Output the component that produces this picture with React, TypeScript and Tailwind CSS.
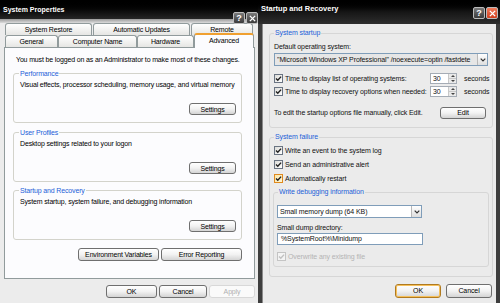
import React from "react";

const FL = "font-['Liberation_Sans',Arial,sans-serif] text-[7px] tracking-[-0.15px] leading-[9px] whitespace-nowrap";
const FR = "font-['Liberation_Sans',Arial,sans-serif] text-[7px] tracking-[-0.1px] leading-[8px] whitespace-nowrap";
const BTN =
  "flex items-center justify-center rounded-[3px] border border-[#6f6f6f] bg-linear-to-b from-[#ffffff] via-[#f2f2f2] to-[#d4d4d4] text-black";

function Check({ checked = true, hot = false, disabled = false }: { checked?: boolean; hot?: boolean; disabled?: boolean }) {
  const box = disabled
    ? "border-[#c4c4c4] bg-[#f4f4f4]"
    : hot
    ? "border-[#e08a1e] bg-linear-to-br from-[#fbe7a8] to-[#fff6d4]"
    : "border-[#6a7482] bg-linear-to-br from-[#dcdcd8] to-[#ffffff]";
  return (
    <span className={`flex h-[9px] w-[9px] shrink-0 items-center justify-center border ${box}`}>
      {checked && (
        <svg viewBox="0 0 7 7" className="h-[7px] w-[7px]">
          <path d="M1 3.4 L2.8 5.2 L6.1 1.6" stroke={disabled ? "#c0c0c0" : "#1f1f1f"} strokeWidth="1.4" fill="none" />
        </svg>
      )}
    </span>
  );
}

function Arrow() {
  return (
    <span className="flex h-full w-[10px] items-center justify-center border-l border-[#b8b8b8] bg-linear-to-b from-[#ffffff] to-[#dedede]">
      <svg viewBox="0 0 6 4" className="h-[4px] w-[6px]">
        <path d="M0.7 0.6 L3 3 L5.3 0.6" stroke="#333" strokeWidth="1.2" fill="none" />
      </svg>
    </span>
  );
}

function Spin() {
  return (
    <span className="flex h-[11px] w-[27px] items-stretch border border-[#a5acb5] bg-white">
      <span className="flex flex-1 items-center pl-[2px]">30</span>
      <span className="flex w-[8px] flex-col border-l border-[#c8c8c8] bg-[#eaeaea]">
        <span className="flex flex-1 items-center justify-center border-b border-[#c8c8c8]">
          <svg viewBox="0 0 4 2" className="h-[2px] w-[4px]"><path d="M0 2 L2 0 L4 2Z" fill="#444" /></svg>
        </span>
        <span className="flex flex-1 items-center justify-center">
          <svg viewBox="0 0 4 2" className="h-[2px] w-[4px]"><path d="M0 0 L2 2 L4 0Z" fill="#444" /></svg>
        </span>
      </span>
    </span>
  );
}

function LGroup({ label, text, top }: { label: string; text: string; top: string }) {
  return (
    <div className={`relative flex h-[50px] w-[229px] flex-col rounded-[3px] border border-[#d3d3cb] pl-[6px] pr-[5px] ${top}`}>
      <span className="absolute left-[5px] top-[-5px] bg-[#fcfcfe] px-[1px] text-[#1c5fd8]">{label}</span>
      <span className="mt-[6px]">{text}</span>
      <div className={`${BTN} mb-[7px] mt-auto h-[12px] w-[47px] self-end`}>Settings</div>
    </div>
  );
}

function Tab({ w, label, sel = false }: { w: string; label: string; sel?: boolean }) {
  if (sel)
    return (
      <div className={`relative z-10 -mt-[2px] -mb-[1px] flex h-[15px] ${w} items-start justify-center rounded-t-[3px] border-x border-t-[2px] border-x-[#919b9c] border-t-[#f0a030] bg-[#fcfcfe] pt-[1px]`}>
        {label}
      </div>
    );
  return (
    <div className={`flex h-[12px] ${w} items-center justify-center rounded-t-[3px] border-x border-t border-[#919b9c] bg-linear-to-b from-[#ffffff] to-[#e6e6e3]`}>
      {label}
    </div>
  );
}

function TitleBtn({ children, red = false }: { children: React.ReactNode; red?: boolean }) {
  return (
    <div
      className={`flex h-[12px] w-[12px] items-center justify-center rounded-[2px] border border-[#bcbcbc] text-[9px] font-bold leading-none tracking-normal text-white ${
        red ? "bg-linear-to-b from-[#f07a5a] to-[#d0401e]" : "bg-linear-to-b from-[#7a7a7a] to-[#3c3c3c]"
      }`}
    >
      {children}
    </div>
  );
}

function XGlyph() {
  return (
    <svg viewBox="0 0 8 8" className="h-[7px] w-[7px]">
      <path d="M1 1 L7 7 M7 1 L1 7" stroke="white" strokeWidth="1.6" />
    </svg>
  );
}

function LeftDialog() {
  return (
    <div className={`relative flex h-[303px] w-[258px] shrink-0 flex-col bg-[#ececec] ${FL}`}>
      <div className="flex h-[19px] items-center bg-linear-to-b from-[#000000] to-[#262626] pl-[3px] text-[7px] font-bold tracking-normal text-white">
        System Properties
      </div>
      <div className="h-[4px] bg-linear-to-b from-[#9a9a9a] to-[#dcdcdc]" />
      <div className="absolute right-0 top-[12px] flex gap-[1px]">
        <TitleBtn>?</TitleBtn>
        <TitleBtn>
          <XGlyph />
        </TitleBtn>
      </div>
      <div className="ml-[5px] flex gap-[1px]">
        <Tab w="w-[87px]" label="System Restore" />
        <Tab w="w-[97px]" label="Automatic Updates" />
        <Tab w="w-[62px]" label="Remote" />
      </div>
      <div className="ml-[5px] flex items-end">
        <Tab w="w-[53px]" label="General" />
        <Tab w="w-[79px]" label="Computer Name" />
        <Tab w="w-[57px]" label="Hardware" />
        <Tab w="w-[60px]" label="Advanced" sel />
      </div>
      <div className="ml-[4px] flex h-[232px] w-[251px] flex-col border border-[#919b9c] bg-[#fcfcfe] pl-[8px]">
        <span className="ml-[3px] mt-[7px]">You must be logged on as an Administrator to make most of these changes.</span>
        <LGroup top="mt-[9px]" label="Performance" text="Visual effects, processor scheduling, memory usage, and virtual memory" />
        <LGroup top="mt-[9px]" label="User Profiles" text="Desktop settings related to your logon" />
        <LGroup top="mt-[8px]" label="Startup and Recovery" text="System startup, system failure, and debugging information" />
        <div className="mt-[8px] flex w-[229px] justify-end gap-[2px]">
          <div className={`${BTN} h-[13px] w-[81px]`}>Environment Variables</div>
          <div className={`${BTN} h-[13px] w-[81px]`}>Error Reporting</div>
        </div>
      </div>
      <div className="mt-[6px] flex justify-end gap-[2px] pr-[3px]">
        <div className={`${BTN} h-[13px] w-[51px]`}>OK</div>
        <div className={`${BTN} h-[13px] w-[48px]`}>Cancel</div>
        <div className="flex h-[13px] w-[46px] items-center justify-center rounded-[3px] border border-[#d8d8d8] bg-[#fafafa] text-[#b0b0b0]">
          Apply
        </div>
      </div>
    </div>
  );
}

function RGroup({ label, className, children, bg = "bg-[#ebebeb]" }: { label: string; className: string; children: React.ReactNode; bg?: string }) {
  return (
    <div className={`relative flex flex-col rounded-[3px] border border-[#d6d6d6] ${className}`}>
      <span className={`absolute left-[4px] top-[-5px] ${bg} px-[1px] text-[#1c5fd8]`}>{label}</span>
      {children}
    </div>
  );
}

function CheckRow({ label, hot = false, disabled = false, className = "" }: { label: string; hot?: boolean; disabled?: boolean; className?: string }) {
  return (
    <div className={`flex items-center gap-[2px] ${className} ${disabled ? "text-[#b4b4b4]" : ""}`}>
      <Check hot={hot} disabled={disabled} />
      <span>{label}</span>
    </div>
  );
}

function RightDialog() {
  return (
    <div className={`flex h-[303px] w-[242px] shrink-0 flex-col bg-[#3e3e3e] ${FR}`}>
      <div className="flex h-[24px] items-start justify-between bg-linear-to-b from-[#000000] via-[#161616] to-[#2e2e2e] pl-[3px] pr-[2px] pt-[5px]">
        <span className="text-[7.5px] font-bold tracking-normal text-white">Startup and Recovery</span>
        <div className="mt-[2px] flex gap-[1px]">
          <TitleBtn>?</TitleBtn>
          <TitleBtn red>
            <XGlyph />
          </TitleBtn>
        </div>
      </div>
      <div className="mx-[4px] flex flex-1 flex-col border-l border-[#8a8a8a] bg-[#ebebeb] text-[#111]">
        <RGroup label="System startup" className="ml-[6px] mt-[9px] h-[95px] w-[224px] pl-[4px]">
          <span className="mt-[9px]">Default operating system:</span>
          <div className="mt-[2px] flex h-[13px] w-[214px] items-stretch border border-[#7f9db9] bg-[#e6e6e6] pl-[2px]">
            <span className="flex flex-1 items-center overflow-hidden">
              "Microsoft Windows XP Professional" /noexecute=optin /fastdete
            </span>
            <Arrow />
          </div>
          <div className="mt-[7px] flex h-[11px] items-center">
            <CheckRow label="Time to display list of operating systems:" className="w-[156px]" />
            <Spin />
            <span className="ml-[7px]">seconds</span>
          </div>
          <div className="mt-[2px] flex h-[11px] items-center">
            <CheckRow label="Time to display recovery options when needed:" className="w-[156px]" />
            <Spin />
            <span className="ml-[7px]">seconds</span>
          </div>
          <div className="mt-[10px] flex items-center">
            <span className="w-[166px]">To edit the startup options file manually, click Edit.</span>
            <div className={`${BTN} h-[12px] w-[46px]`}>Edit</div>
          </div>
        </RGroup>
        <RGroup label="System failure" className="ml-[6px] mt-[9px] h-[140px] w-[224px] pl-[4px]">
          <CheckRow label="Write an event to the system log" className="mt-[8px]" />
          <CheckRow label="Send an administrative alert" className="mt-[5px]" />
          <CheckRow label="Automatically restart" hot className="mt-[5px]" />
          <RGroup label="Write debugging information" className="ml-[-1px] mt-[9px] h-[75px] w-[216px] pl-[3px]">
            <div className="mt-[12px] flex h-[13px] w-[145px] items-stretch border border-[#7f9db9] bg-white pl-[2px]">
              <span className="flex flex-1 items-center">Small memory dump (64 KB)</span>
              <Arrow />
            </div>
            <span className="mt-[6px]">Small dump directory:</span>
            <div className="mt-[1px] flex h-[12px] w-[146px] items-center border border-[#7f9db9] bg-white pl-[3px]">
              %SystemRoot%\Minidump
            </div>
            <CheckRow label="Overwrite any existing file" disabled className="mt-[7px]" />
          </RGroup>
        </RGroup>
        <div className="mt-[7px] flex justify-end gap-[5px] pr-[4px]">
          <div className={`${BTN} h-[14px] w-[46px] border-[#b07a20] shadow-[inset_0_0_0_1px_#f6c05a]`}>OK</div>
          <div className={`${BTN} h-[14px] w-[46px]`}>Cancel</div>
        </div>
      </div>
    </div>
  );
}

export default function App() {
  return (
    <div className="flex h-[303px] w-[500px] overflow-hidden bg-[#3e3e3e]">
      <LeftDialog />
      <RightDialog />
    </div>
  );
}
